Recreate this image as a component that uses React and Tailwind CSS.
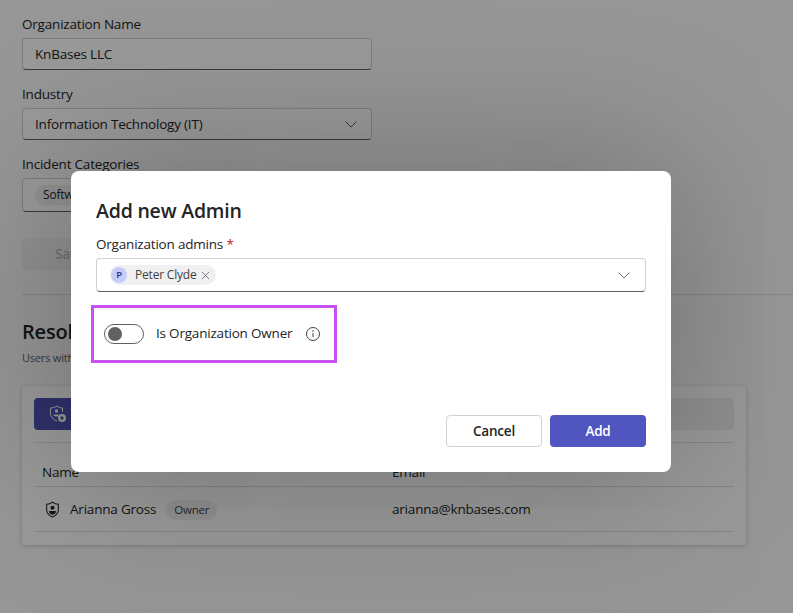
import React from "react";

const font = { fontFamily: '"Open Sans", "Noto Sans", sans-serif' };

function Chevron({ className }) {
  return (
    <svg viewBox="0 0 16 16" className={className} fill="none" stroke="currentColor" strokeWidth="1">
      <path d="M2.5 5.5 8 11l5.5-5.5" />
    </svg>
  );
}

function Field({ label, children, height = "h-8" }) {
  return (
    <div className="w-[350px]">
      <div className="text-[13.5px] leading-[20px] text-[#242424]">{label}</div>
      <div
        className={`mt-1 ${height} flex items-center justify-between px-3 bg-white rounded border border-[#d1d1d1] border-b-[#616161] text-[13.5px] text-[#242424]`}
      >
        {children}
      </div>
    </div>
  );
}

function ShieldUser() {
  return (
    <svg viewBox="0 0 16 16" className="w-[17px] h-[17px] text-[#242424]" fill="none" stroke="currentColor">
      <path d="M8 1c1.6 1.3 3.4 2 5.5 2v5c0 3.2-2 5.5-5.5 7-3.500-1.500-5.500-3.800-5.500-7V3C4.600 3 6.400 2.300 8 1Z" />
      <circle cx="8" cy="6.300" r="1.900" fill="currentColor" stroke="none" />
      <path d="M4.800 9.500h6.400v1c-.8 1.300-1.800 2-3.200 2.500-1.400-.5-2.400-1.200-3.200-2.500v-1Z" fill="currentColor" stroke="none" />
    </svg>
  );
}

function ShieldAdd() {
  return (
    <svg viewBox="0 0 18 18" className="w-[18px] h-[18px] text-white" fill="none" stroke="currentColor">
      <path d="M8 1c1.600 1.200 3.300 1.900 5.500 2v4M8 16C4 14.500 1.500 12 1.500 8V3C3.700 2.900 6.400 2.200 8 1" />
      <circle cx="7.500" cy="6" r="1.700" fill="currentColor" stroke="none" />
      <path d="M4.500 9.500h5v2H6l-1.500-1v-1Z" fill="currentColor" stroke="none" />
      <circle cx="13" cy="13" r="4" fill="currentColor" stroke="none" />
      <path d="M13 11v4M11 13h4" stroke="#3d3f8f" strokeWidth="1.200" />
    </svg>
  );
}

function Background() {
  return (
    <div className="px-[22px] pt-[14px] flex flex-col">
      <div className="flex flex-col gap-[14px]">
        <Field label="Organization Name">KnBases LLC</Field>
        <Field label="Industry">
          <span>Information Technology (IT)</span>
          <Chevron className="w-4 h-4 text-[#616161]" />
        </Field>
        <Field label="Incident Categories" height="h-[34px]">
          <span className="h-5 px-2 rounded-full bg-[#f0f0f0] text-[12px] leading-5">Software</span>
        </Field>
      </div>
      <button className="mt-[26px] w-[96px] h-8 rounded bg-[#f0f0f0] text-[13.5px] font-semibold text-[#bdbdbd]">
        Save
      </button>
      <div className="mt-6 -mr-[22px] border-t border-[#e0e0e0]" />
      <h2 className="mt-[23px] text-[20px] leading-7 font-semibold text-[#242424]">Resolvers</h2>
      <p className="mt-[4px] text-[11px] leading-4 text-[#616161]">Users with access</p>
      <div className="mt-5 w-[724px] h-[159px] px-3 pt-3 rounded bg-white shadow-[0_1px_4px_rgba(0,0,0,0.2)]">
        <div className="h-8 rounded bg-[#f0f0f0]">
          <div className="w-[96px] h-8 pl-[15px] flex items-center rounded bg-[#4f52b2]">
            <ShieldAdd />
          </div>
        </div>
        <div className="mt-3 h-[45px] grid grid-cols-[350px_1fr] items-end pb-[4px] px-2 border-t border-b border-[#e0e0e0] text-[13.5px] text-[#242424]">
          <span>Name</span>
          <span>Email</span>
        </div>
        <div className="h-[45px] pt-[1px] grid grid-cols-[350px_1fr] items-center px-2 border-b border-[#e0e0e0] text-[13.5px] text-[#242424]">
          <div className="flex items-center">
            <span className="ml-[2px]">
              <ShieldUser />
            </span>
            <span className="ml-[9px]">Arianna Gross</span>
            <span className="ml-[10px] h-5 px-2 rounded-full bg-[#f0f0f0] text-[11.500px] leading-5 text-[#424242]">
              Owner
            </span>
          </div>
          <span>arianna@knbases.com</span>
        </div>
      </div>
    </div>
  );
}

function Modal() {
  return (
    <div className="w-[600px] h-[301px] px-[25px] pt-[27px] flex flex-col rounded-lg bg-white shadow-[0_0_160px_rgba(0,0,0,0.28)]">
      <h1 className="text-[19.500px] leading-[26px] font-semibold text-[#242424]">Add new Admin</h1>
      <div className="mt-[10px] text-[13.5px] leading-5 text-[#242424]">
        Organization admins <span className="text-[#c50f1f]">*</span>
      </div>
      <div className="mt-1 h-[34px] pl-[13px] pr-[13px] flex items-center justify-between rounded border border-[#d1d1d1] border-b-[#616161]">
        <div className="h-5 pl-[1px] pr-[6px] flex items-center rounded-full bg-[#f0f0f0]">
          <span className="w-4 h-4 rounded-full bg-[#c5cbfa] text-[#2f3380] text-[9.500px] font-semibold flex items-center justify-center">
            P
          </span>
          <span className="ml-2 text-[12px] text-[#424242]">Peter Clyde</span>
          <svg viewBox="0 0 10 10" className="ml-[5px] w-[9px] h-[9px] text-[#616161]" fill="none" stroke="currentColor" strokeWidth="0.900">
            <path d="M1 1l8 8M9 1 1 9" />
          </svg>
        </div>
        <Chevron className="w-[16px] h-[16px] text-[#757575]" />
      </div>
      <div className="mt-[13px] -ml-[5px] w-[246px] h-[58px] pl-[10px] pb-[2px] flex items-center border-[3px] border-[#c84ff0]">
        <div className="mt-[1px] w-10 h-5 pl-[3px] flex items-center rounded-full border border-[#616161]">
          <span className="w-[14px] h-[14px] rounded-full bg-[#616161]" />
        </div>
        <span className="ml-3 text-[13.5px] text-[#242424]">Is Organization Owner</span>
        <svg viewBox="0 0 16 16" className="ml-[13px] mt-[1px] w-[16px] h-[16px] text-[#424242]" fill="none" stroke="currentColor">
          <circle cx="8" cy="8" r="6.500" />
          <path d="M8 7v4.200" />
          <circle cx="8" cy="5" r="0.800" fill="currentColor" stroke="none" />
        </svg>
      </div>
      <div className="mt-[52px] flex justify-end gap-2">
        <button className="w-24 h-8 rounded border border-[#d1d1d1] bg-white text-[13.5px] font-semibold text-[#242424]">
          Cancel
        </button>
        <button className="w-24 h-8 rounded bg-[#5155bf] text-[13.5px] font-semibold text-white">Add</button>
      </div>
    </div>
  );
}

export default function App() {
  return (
    <div className="relative w-[793px] h-[613px] overflow-hidden bg-[#fafafa] tracking-[-0.2px]" style={font}>
      <Background />
      <div className="absolute inset-0 bg-black/40 pl-[71px] pt-[171px]">
        <Modal />
      </div>
    </div>
  );
}
